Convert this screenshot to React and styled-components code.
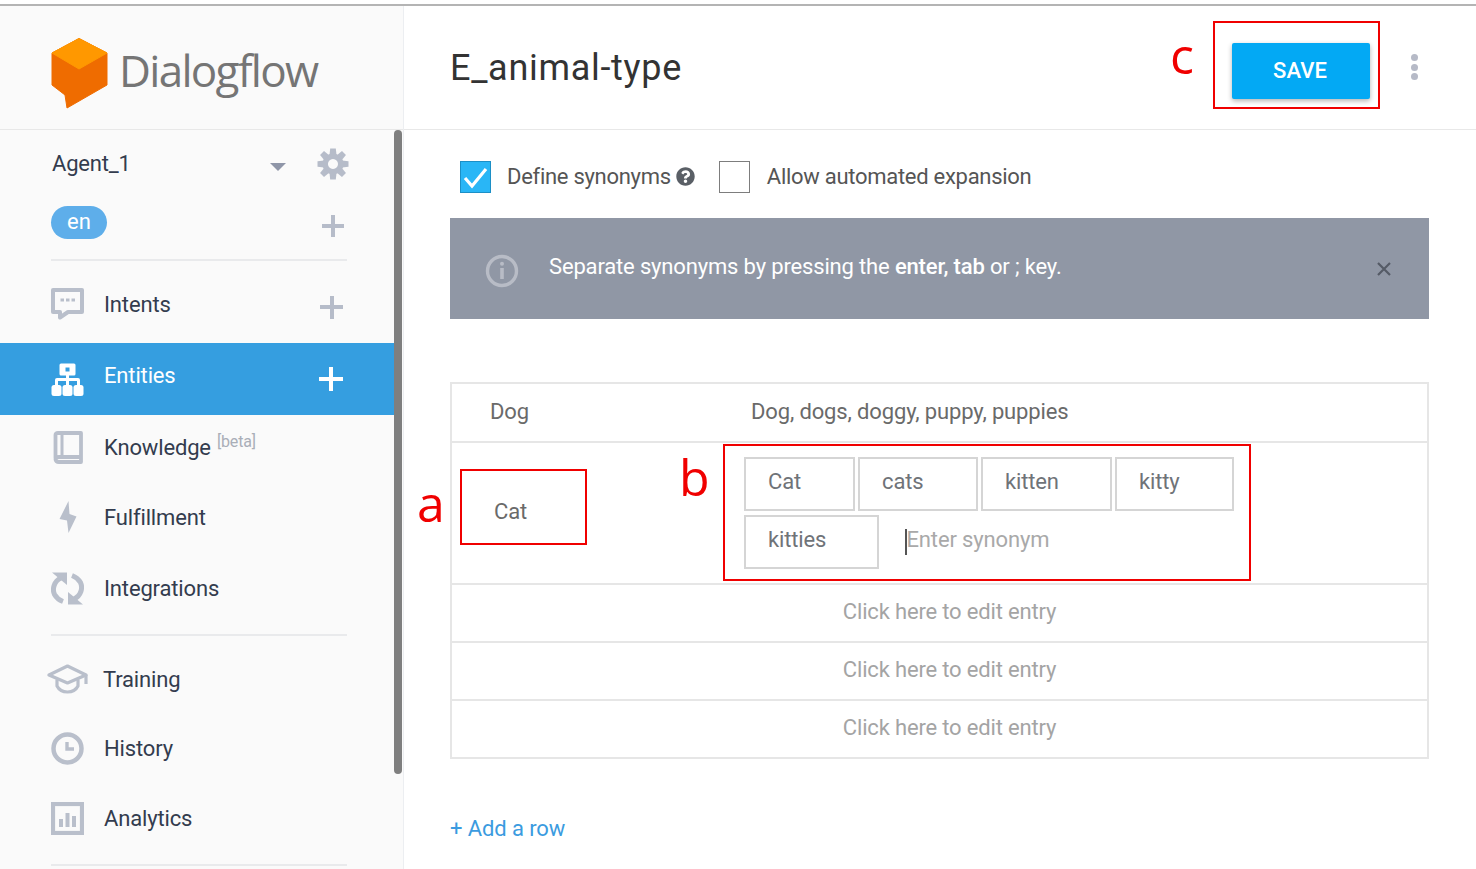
import React from 'react';
import styled, { createGlobalStyle } from 'styled-components';
import { FaQuestionCircle } from 'react-icons/fa';

const Global = createGlobalStyle`
  html, body { margin: 0; padding: 0; background: #fff; }
  body { font-family: Roboto, "Liberation Sans", sans-serif; overflow: hidden; }
  * { box-sizing: border-box; }
`;

const Page = styled.div`
  position: relative;
  width: 1476px;
  height: 869px;
  overflow: hidden;
  display: flex;
  flex-direction: column;
`;
const TopLine = styled.div`
  height: 6px;
  flex: none;
  background: #fff;
  border-top: 4px solid #fff;
  border-bottom: 2px solid #b4b4b4;
`;
const Shell = styled.div`
  flex: 1;
  display: flex;
  min-height: 0;
`;
const Sidebar = styled.aside`
  width: 404px;
  flex: none;
  background: #fafafa;
  border-right: 1px solid #eceef1;
  display: flex;
  flex-direction: column;
`;
const Brand = styled.div`
  height: 124px;
  flex: none;
  padding: 32px 0 0 51px;
  display: flex;
  align-items: flex-start;
  gap: 11px;
  border-bottom: 1px solid #e8e8e8;
`;
const BrandName = styled.span`
  font-family: "Open Sans", Roboto, sans-serif;
  font-size: 44px;
  line-height: 60px;
  letter-spacing: -1.7px;
  color: #757575;
  margin-top: 2px;
`;
const SideBody = styled.div`
  position: relative;
  flex: 1;
  min-height: 0;
  width: 394px;
`;
const Scrollbar = styled.div`
  position: absolute;
  top: 0;
  left: 394px;
  width: 8px;
  height: 644px;
  border-radius: 4px;
  background: #7f7f7f;
`;
const AgentRow = styled.div`
  height: 68px;
  display: flex;
  align-items: center;
  padding: 0 45px 0 52px;
  color: #333c4e;
  font-size: 22px;
  letter-spacing: -0.2px;
`;
const AgentName = styled.span`
  flex: 1;
  margin-top: -2px;
`;
const Caret = styled.span`
  width: 0;
  height: 0;
  border-left: 8px solid transparent;
  border-right: 8px solid transparent;
  border-top: 8px solid #8f96a8;
  margin: 6px 31px 0 0;
`;
const LangRow = styled.div`
  height: 61px;
  display: flex;
  align-items: flex-start;
  justify-content: space-between;
  padding: 8px 50px 0 51px;
`;
const LangPill = styled.span`
  width: 56px;
  height: 33px;
  border-radius: 17px;
  background: #5eaeea;
  color: #fff;
  font-size: 22px;
  line-height: 31px;
  text-align: center;
`;
const Plus = styled.span`
  position: relative;
  display: block;
  flex: none;
  width: ${p => p.$size || 22}px;
  height: ${p => p.$size || 22}px;
  color: ${p => (p.$light ? '#fff' : '#b6bcc9')};
  margin-top: ${p => p.$top || 0}px;
  &::before, &::after {
    content: '';
    position: absolute;
    background: currentColor;
  }
  &::before { left: 0; right: 0; top: calc(50% - 2px); height: 4px; }
  &::after { top: 0; bottom: 0; left: calc(50% - 2px); width: 4px; }
`;
const Divider = styled.div`
  height: 2px;
  margin: ${p => p.$mt || 0}px 47px 0 51px;
  background: #e9eaec;
`;
const NavRow = styled.div`
  height: ${p => p.$h}px;
  display: flex;
  align-items: center;
  padding: ${p => p.$pt || 0}px 51px 0 ${p => p.$pl || 51}px;
  background: ${p => (p.$active ? '#359ee0' : 'transparent')};
  color: ${p => (p.$active ? '#fff' : '#333c4e')};
  font-size: 22px;
  letter-spacing: -0.15px;
`;
const NavIcon = styled.span`
  width: ${p => p.$w || 33}px;
  height: 34px;
  flex: none;
  display: flex;
  align-items: center;
  justify-content: center;
  margin-right: ${p => p.$gap || 20}px;
  color: #b9bfcb;
  ${p => p.$active && 'color: #fff;'}
  svg { display: block; }
`;
const NavLabel = styled.span`
  flex: 1;
  margin-top: ${p => p.$top || 0}px;
`;
const Beta = styled.sup`
  font-size: 16px;
  color: #a9aeb8;
  margin-left: 6px;
  line-height: 0;
  position: relative;
  top: 2px;
  vertical-align: 10px;
`;
const Main = styled.main`
  flex: 1;
  min-width: 0;
  display: flex;
  flex-direction: column;
`;
const MainHeader = styled.header`
  height: 124px;
  flex: none;
  display: flex;
  align-items: flex-start;
  border-bottom: 1px solid #e8e8e8;
  padding: 37px 58px 0 46px;
`;
const Title = styled.h1`
  flex: 1;
  margin: 0;
  font-weight: 400;
  font-size: 36px;
  line-height: 50px;
  letter-spacing: 0.7px;
  color: #333;
`;
const SaveButton = styled.button`
  width: 138px;
  height: 56px;
  border: 0;
  border-radius: 2px;
  background: #03a9f4;
  color: #fff;
  font: 500 22px Roboto, sans-serif;
  letter-spacing: 0.1px;
  padding: 0 2px 2px 0;
  box-shadow: 0 2px 5px rgba(0, 0, 0, 0.3);
`;
const Dots = styled.span`
  display: flex;
  flex-direction: column;
  gap: 2.6px;
  margin: 11px 0 0 41px;
  i {
    display: block;
    width: 7px;
    height: 7px;
    border-radius: 50%;
    background: #b6bac7;
  }
`;
const Content = styled.div`
  padding: 0 47px 0 46px;
`;
const OptionRow = styled.div`
  height: 88px;
  display: flex;
  align-items: center;
  padding: 6px 0 0 10px;
  color: #555;
  font-size: 22px;
  letter-spacing: -0.28px;
`;
const Check = styled.span`
  width: 31px;
  height: 32px;
  flex: none;
  display: flex;
  align-items: center;
  justify-content: center;
  margin-left: ${p => p.$ml || 0}px;
  border: 1.5px solid ${p => (p.$on ? '#1c8fc6' : '#7d7d7d')};
  background: ${p => (p.$on ? '#29b6f6' : '#fff')};
`;
const OptionText = styled.span`
  margin: -2px 0 0 ${p => p.$ml}px;
`;
const HelpIcon = styled(FaQuestionCircle)`
  width: 19px;
  height: 19px;
  color: #5a5f66;
  margin: -1px 0 0 5px;
`;
const Banner = styled.div`
  height: 101px;
  display: flex;
  align-items: center;
  padding: 0 38px 0 35px;
  background: #9097a5;
  color: #fff;
  font-size: 22px;
  letter-spacing: -0.16px;
`;
const BannerIcon = styled.span`
  display: flex;
  margin-top: 5px;
`;
const BannerText = styled.span`
  flex: 1;
  margin: -4px 0 0 30px;
`;
const Strong = styled.span`
  font-weight: 500;
`;
const Table = styled.div`
  margin-top: 63px;
  border: 2px solid #e6e6e6;
`;
const TableRow = styled.div`
  display: grid;
  grid-template-columns: 299px 1fr;
  min-height: ${p => p.$h}px;
  border-top: ${p => (p.$first ? 0 : '2px solid #e6e6e6')};
  color: #6a6a6a;
  font-size: 22px;
  letter-spacing: -0.14px;
`;
const Cell = styled.div`
  display: flex;
  align-items: center;
  padding-left: ${p => p.$pl || 0}px;
  padding-bottom: ${p => p.$pb || 0}px;
`;
const ChipWrap = styled.div`
  display: flex;
  flex-wrap: wrap;
  align-content: flex-start;
  gap: 4px 3px;
  padding-top: 14px;
  width: 500px;
  margin-left: -7px;
`;
const Chip = styled.span`
  width: ${p => p.$w}px;
  height: 54px;
  border: 2px solid #d5d5d5;
  padding-left: 22px;
  line-height: 46px;
  color: #6f7378;
`;
const SynInput = styled.span`
  margin-left: 23px;
  height: 54px;
  display: flex;
  align-items: flex-start;
  line-height: 50px;
  color: #a9a9a9;
  &::before {
    content: '';
    width: 1.5px;
    height: 26px;
    margin: 14px 0 0 0;
    background: #555;
  }
`;
const EmptyRow = styled.div`
  height: 58px;
  border-top: 2px solid #e6e6e6;
  display: flex;
  align-items: center;
  justify-content: center;
  color: #a4a4a4;
  font-size: 22px;
  letter-spacing: -0.17px;
  padding: 0 0 4px 20px;
`;
const AddRow = styled.div`
  margin-top: 57px;
  color: #3b9be0;
  font-size: 22px;
  letter-spacing: -0.1px;
`;
const Mark = styled.div`
  position: absolute;
  left: ${p => p.$x}px;
  top: ${p => p.$y}px;
  width: ${p => p.$w}px;
  height: ${p => p.$h}px;
  border: 2px solid #f00000;
`;
const MarkLetter = styled.span`
  position: absolute;
  left: ${p => p.$x}px;
  top: ${p => p.$y}px;
  font-family: "Open Sans", "Liberation Sans", sans-serif;
  font-size: 50px;
  line-height: 60px;
  color: #f00000;
`;

const Logo = () => (
  <svg width="57" height="71" viewBox="0 0 57 71">
    <path d="M28 0.5 L56 15 L56 47 L16 70 L14 57 L1 47 L1 15 Z" fill="#ef6c00" stroke="#ef6c00" strokeLinejoin="round" />
    <path d="M28 0.5 L56 15 L28 31 L1 15 Z" fill="#ff9800" stroke="#ff9800" strokeLinejoin="round" />
  </svg>
);
const Gear = () => {
  const teeth = [0, 45, 90, 135, 180, 225, 270, 315];
  return (
    <svg width="32" height="32" viewBox="0 0 32 32" fill="#b6bcc9">
      <path fillRule="evenodd" d="M16 5.500 a10.500 10.500 0 1 0 0.010 0 Z M16 11 a5 5 0 1 1 -0.010 0 Z" />
      {teeth.map(a => (
        <path key={a} d="M13.200 0.500 H18.800 L19.500 7 H12.500 Z" transform={`rotate(${a} 16 16)`} />
      ))}
    </svg>
  );
};
const IntentIcon = () => (
  <svg width="33" height="33" viewBox="0 0 33 33" fill="none" stroke="currentColor">
    <path d="M2 2 H31 V24 H17 L9 29.500 V24 H2 Z" strokeWidth="4" strokeLinejoin="round" />
    <path d="M9.500 12h3.500M15 12h3.500M20.500 12h3.500" strokeWidth="3" />
  </svg>
);
const SitemapIcon = () => (
  <svg width="33" height="33" viewBox="0 0 33 33" fill="currentColor">
    <path fillRule="evenodd" d="M10 0.500 H23 Q24.500 0.500 24.500 2 V11 Q24.500 12.500 23 12.500 H18 V15 H27 Q29 15 29 17 V23 H26 V18 H18 V23 H15 V18 H7 V23 H4 V17 Q4 15 6 15 H15 V12.500 H10 Q8.500 12.500 8.500 11 V2 Q8.500 0.500 10 0.500 Z M14.500 4.500 V8.500 H18.500 V4.500 Z" />
    <rect x="0.500" y="22" width="10" height="11" rx="2.500" />
    <rect x="11.500" y="22" width="10" height="11" rx="2.500" />
    <rect x="22.500" y="22" width="10" height="11" rx="2.500" />
  </svg>
);
const BookIcon = () => (
  <svg width="30" height="33" viewBox="0 0 30 33" fill="none" stroke="currentColor" strokeWidth="3.800">
    <path d="M2.500 27 V4 Q2.500 2 5 2 H28 V31 H6 Q2.500 31 2.500 28 Q2.500 26 6 26 H28" strokeLinejoin="round" />
    <path d="M9 3 V25" strokeWidth="3" />
  </svg>
);
const BoltIcon = () => (
  <svg width="18" height="33" viewBox="0 0 18 33" fill="currentColor">
    <path d="M9.500 0 L10.500 13 L17.500 15.500 L9.500 32 L8 19.500 L0.500 18 Z" />
  </svg>
);
const SyncIcon = () => (
  <svg width="33" height="33" viewBox="0 0 33 33" fill="none" stroke="currentColor" strokeWidth="5">
    <path d="M10 6 C3 9 1 17 3.500 22.500 C5.500 26 8 28 12 29.500" />
    <path d="M23 27 C30 24 32 16 29.500 10.500 C27.500 7 25 5 21 3.500" />
    <path d="M1 0.500 H16 V13 Z" fill="currentColor" stroke="none" />
    <path d="M32 32.500 H17 V20 Z" fill="currentColor" stroke="none" />
  </svg>
);
const CapIcon = () => (
  <svg width="41" height="30" viewBox="0 0 41 30" fill="none" stroke="currentColor" strokeWidth="3.200" strokeLinejoin="round">
    <path d="M20.500 2 L39 11 L20.500 19 L2 11 Z" />
    <path d="M10 15.500 V22 Q13 28 20.500 28 Q28 28 31 22 V15.500" />
    <path d="M39 11 V20" />
  </svg>
);
const ClockIcon = () => (
  <svg width="33" height="33" viewBox="0 0 33 33" fill="none" stroke="currentColor">
    <circle cx="16.500" cy="16.500" r="14" strokeWidth="4.500" />
    <path d="M16 10 V17 H23" strokeWidth="3.400" />
  </svg>
);
const ChartIcon = () => (
  <svg width="33" height="33" viewBox="0 0 33 33">
    <rect x="2" y="2" width="29" height="29" fill="none" stroke="currentColor" strokeWidth="4.200" />
    <path d="M8 17h4v8H8zM14.500 11h4v14h-4zM21 14h4v11h-4z" fill="currentColor" />
  </svg>
);
const InfoIcon = () => (
  <svg width="34" height="34" viewBox="0 0 34 34" fill="none" stroke="#b8bcc6">
    <circle cx="17" cy="17" r="14.500" strokeWidth="3.400" />
    <path d="M17 14 V25" strokeWidth="3.600" />
    <circle cx="17" cy="9.800" r="2" fill="#b8bcc6" stroke="none" />
  </svg>
);
const CloseIcon = () => (
  <svg width="14" height="14" viewBox="0 0 14 14" stroke="#555b66" strokeWidth="2.200">
    <path d="M1 1 L13 13 M13 1 L1 13" />
  </svg>
);
const Tick = () => (
  <svg width="25" height="23" viewBox="0 0 25 23" fill="none" stroke="#fff" strokeWidth="3.200">
    <path d="M2 12 L9 20 L23 3" />
  </svg>
);

const chips = [
  ['Cat', 111],
  ['cats', 120],
  ['kitten', 131],
  ['kitty', 119],
];

export default function App() {
  return (
    <Page>
      <Global />
      <TopLine />
      <Shell>
        <Sidebar>
          <Brand>
            <Logo />
            <BrandName>Dialogflow</BrandName>
          </Brand>
          <SideBody>
            <AgentRow>
              <AgentName>Agent_1</AgentName>
              <Caret />
              <Gear />
            </AgentRow>
            <LangRow>
              <LangPill>en</LangPill>
              <Plus $top={9} />
            </LangRow>
            <Divider />
            <NavRow $h={82} $pt={4}>
              <NavIcon><IntentIcon /></NavIcon>
              <NavLabel>Intents</NavLabel>
              <Plus $size={23} $top={6} />
            </NavRow>
            <NavRow $h={72} $active>
              <NavIcon $active><SitemapIcon /></NavIcon>
              <NavLabel $top={-8}>Entities</NavLabel>
              <Plus $size={24} $light />
            </NavRow>
            <NavRow $h={64}>
              <NavIcon><BookIcon /></NavIcon>
              <NavLabel>Knowledge<Beta>[beta]</Beta></NavLabel>
            </NavRow>
            <NavRow $h={76}>
              <NavIcon><BoltIcon /></NavIcon>
              <NavLabel>Fulfillment</NavLabel>
            </NavRow>
            <NavRow $h={66}>
              <NavIcon><SyncIcon /></NavIcon>
              <NavLabel>Integrations</NavLabel>
            </NavRow>
            <Divider $mt={13} />
            <NavRow $h={86} $pl={47}>
              <NavIcon $w={41} $gap={15}><CapIcon /></NavIcon>
              <NavLabel>Training</NavLabel>
            </NavRow>
            <NavRow $h={52}>
              <NavIcon><ClockIcon /></NavIcon>
              <NavLabel>History</NavLabel>
            </NavRow>
            <NavRow $h={88}>
              <NavIcon><ChartIcon /></NavIcon>
              <NavLabel>Analytics</NavLabel>
            </NavRow>
            <Divider $mt={2} />
            <Scrollbar />
          </SideBody>
        </Sidebar>
        <Main>
          <MainHeader>
            <Title>E_animal-type</Title>
            <SaveButton>SAVE</SaveButton>
            <Dots><i /><i /><i /></Dots>
          </MainHeader>
          <Content>
            <OptionRow>
              <Check $on><Tick /></Check>
              <OptionText $ml={16}>Define synonyms</OptionText>
              <HelpIcon />
              <Check $ml={24} />
              <OptionText $ml={17}>Allow automated expansion</OptionText>
            </OptionRow>
            <Banner>
              <BannerIcon><InfoIcon /></BannerIcon>
              <BannerText>Separate synonyms by pressing the <Strong>enter, tab</Strong> or ; key.</BannerText>
              <CloseIcon />
            </Banner>
            <Table>
              <TableRow $h={57} $first>
                <Cell $pl={38} $pb={2}>Dog</Cell>
                <Cell $pb={2}>Dog, dogs, doggy, puppy, puppies</Cell>
              </TableRow>
              <TableRow $h={142}>
                <Cell $pl={42} $pb={4}>Cat</Cell>
                <ChipWrap>
                  {chips.map(([t, w]) => <Chip key={t} $w={w}>{t}</Chip>)}
                  <Chip $w={135}>kitties</Chip>
                  <SynInput>Enter synonym</SynInput>
                </ChipWrap>
              </TableRow>
              <EmptyRow>Click here to edit entry</EmptyRow>
              <EmptyRow>Click here to edit entry</EmptyRow>
              <EmptyRow>Click here to edit entry</EmptyRow>
            </Table>
            <AddRow>+ Add a row</AddRow>
          </Content>
        </Main>
      </Shell>
      <Mark $x={460} $y={469} $w={127} $h={76} />
      <Mark $x={723} $y={444} $w={528} $h={137} />
      <Mark $x={1213} $y={21} $w={167} $h={88} />
      <MarkLetter $x={417} $y={473}>a</MarkLetter>
      <MarkLetter $x={679} $y={447}>b</MarkLetter>
      <MarkLetter $x={1170} $y={25}>c</MarkLetter>
    </Page>
  );
}
